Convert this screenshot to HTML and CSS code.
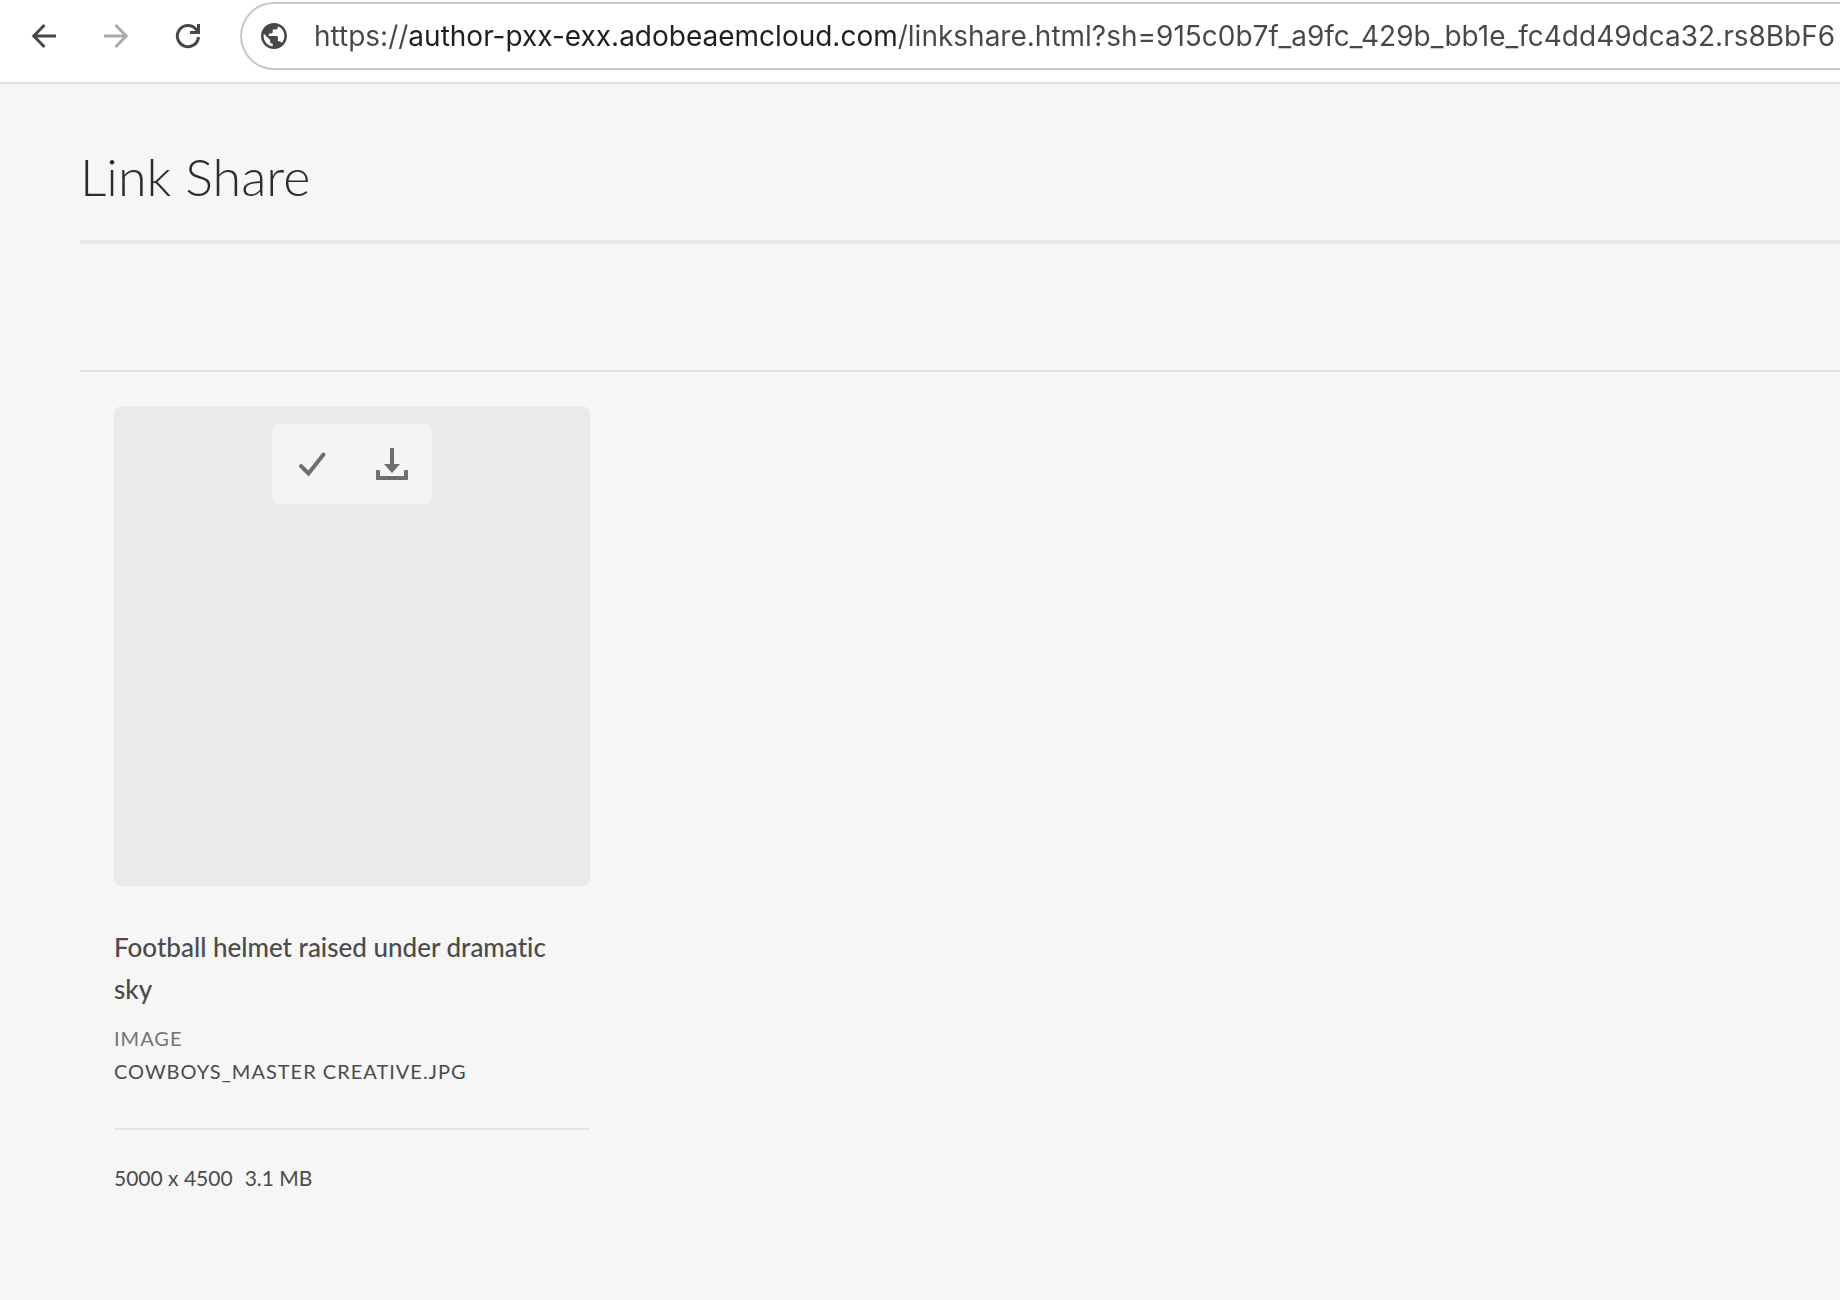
FILE: index.html
```html
<!DOCTYPE html>
<html lang="en">
  <head>
    <meta charset="UTF-8" />
    <meta name="viewport" content="width=device-width, initial-scale=1.0" />
    <title>Link Share</title>
    <link rel="stylesheet" href="styles.css">
  </head>
  <body>
    <header class="toolbar">
      <nav class="nav-buttons">
        <button type="button" class="nav-button" aria-label="Back">
          <svg width="24" height="24" viewBox="0 0 24 24">
            <path d="M12.5 1 1.8 12l10.7 11M2 12h22" />
          </svg>
        </button>
        <button type="button" class="nav-button forward" aria-label="Forward">
          <svg width="24" height="24" viewBox="0 0 24 24">
            <path d="M11.5 1 22.2 12 11.5 23M22 12H0" />
          </svg>
        </button>
        <button type="button" class="nav-button" aria-label="Reload">
          <svg width="24" height="24" viewBox="0 0 24 24">
            <path d="M22.500 13A10.600 10.600 0 1 1 20 5.200L22 8M22.500 0v8.500H14" />
          </svg>
        </button>
      </nav>
      <div class="address-bar">
        <svg class="globe" width="26" height="26" viewBox="2 2 20 20">
          <path d="M12 2C6.480 2 2 6.480 2 12s4.480 10 10 10 10-4.480 10-10S17.520 2 12 2zm-1 17.930c-3.950-.49-7-3.850-7-7.930 0-.62.08-1.210.21-1.790L9 15v1c0 1.100.9 2 2 2v1.930zm6.900-2.540c-.26-.81-1-1.390-1.900-1.390h-1v-3c0-.55-.45-1-1-1H8v-2h2c.55 0 1-.45 1-1V7h2c1.100 0 2-.9 2-2v-.41c2.930 1.190 5 4.060 5 7.410 0 2.080-.8 3.970-2.100 5.390z" />
        </svg>
        <input class="url" type="text" aria-label="Address" spellcheck="false"
          value="https://author-pxx-exx.adobeaemcloud.com/linkshare.html?sh=915c0b7f_a9fc_429b_bb1e_fc4dd49dca32.rs8BbF6" />
      </div>
    </header>

    <main class="page">
      <h1 class="page-title">Link Share</h1>
      <div class="action-bar"></div>
      <section class="cards">
        <article class="card">
          <div class="card-preview">
            <div class="quick-actions">
              <button type="button" aria-label="Select">
                <svg width="32" height="32" viewBox="0 0 32 32">
                  <path class="check" d="M5 18 12.500 25.500 27.500 6.500" />
                </svg>
              </button>
              <button type="button" aria-label="Download">
                <svg width="32" height="32" viewBox="0 0 32 32">
                  <path d="M15 0h2q1 0 1 1v15h6L16 25 8 16h6V1q0-1 1-1zM1 22h2q1 0 1 1v5h24v-5q0-1 1-1h2q1 0 1 1v8q0 1-1 1H1q-1 0-1-1v-8q0-1 1-1z" />
                </svg>
              </button>
            </div>
          </div>
          <div class="card-content">
            <h2 class="card-title">Football helmet raised under dramatic sky</h2>
            <p class="card-type">Image</p>
            <p class="card-file">Cowboys_Master Creative.jpg</p>
          </div>
          <div class="card-meta">
            <span>5000 x 4500</span>
            <span>3.1 MB</span>
          </div>
        </article>
      </section>
    </main>
  </body>
</html>
```

FILE: styles.css
```css
* {
  box-sizing: border-box;
}

body {
  margin: 0;
  min-height: 100vh;
  background-color: #f6f6f6;
  color: #4b4b4b;
  font-family: Lato, "Open Sans", sans-serif;
  font-variant-ligatures: none;
  overflow-x: hidden;
}

button {
  display: flex;
  justify-content: center;
  align-items: center;
  padding: 0;
  border: 0;
  background: none;
  cursor: pointer;
}

h1,
h2,
p {
  margin: 0;
}

/* browser toolbar */
.toolbar {
  display: flex;
  align-items: flex-start;
  gap: 16px;
  padding: 2px 0 12px 8px;
  background-color: #fff;
  border-bottom: 2px solid #dfdfdf;
}

.nav-buttons {
  display: flex;
}

.nav-button {
  width: 72px;
  height: 68px;
}

.nav-button svg {
  overflow: visible;
}

.nav-button path {
  fill: none;
  stroke: #474747;
  stroke-width: 3;
}

.forward path {
  stroke: #ababab;
}

.address-bar {
  flex: 1;
  display: flex;
  align-items: center;
  gap: 27px;
  height: 68px;
  padding-left: 19px;
  border: 2px solid #c7c7c7;
  border-right: 0;
  border-radius: 34px 0 0 34px;
}

.globe {
  flex: none;
  fill: #474747;
}

/* the host part of the address is darker than the rest */
.url {
  flex: 1;
  min-width: 0;
  height: 40px;
  padding: 0;
  border: 0;
  outline: 0;
  background: linear-gradient(90deg, #474747 94px, #1f1f1f 94px, #1f1f1f 582px, #474747 582px);
  background-clip: text;
  -webkit-background-clip: text;
  color: transparent;
  font: 28px/40px Inter, sans-serif;
}

/* page */
.page {
  padding-left: 80px;
}

.page-title {
  padding: 60px 0 32px;
  border-bottom: 4px solid #e9e9e9;
  color: #2c2c2c;
  font-size: 52px;
  font-weight: 300;
  line-height: 64px;
}

.action-bar {
  height: 128px;
  border-bottom: 2px solid #e1e1e1;
}

.cards {
  display: grid;
  grid-template-columns: repeat(auto-fill, 476px);
  gap: 34px;
  padding: 34px;
}

.card-preview {
  display: flex;
  justify-content: center;
  align-items: flex-start;
  height: 480px;
  padding-top: 18px;
  border-radius: 8px;
  background-color: #eaeaea;
}

.quick-actions {
  display: flex;
  border-radius: 8px;
  background-color: #f5f5f5;
}

.quick-actions button {
  width: 80px;
  height: 80px;
}

.quick-actions svg {
  fill: #6e6e6e;
}

.quick-actions .check {
  fill: none;
  stroke: #6e6e6e;
  stroke-width: 4;
  stroke-linecap: round;
}

.card-content {
  padding: 40px 0;
  border-bottom: 2px solid #e7e7e7;
}

.card-title {
  margin-bottom: 12px;
  font-size: 26px;
  font-weight: 500;
  line-height: 42px;
}

.card-type,
.card-file {
  font-size: 20px;
  line-height: 33px;
  letter-spacing: 1px;
  text-transform: uppercase;
}

.card-type {
  color: #747474;
}

.card-meta {
  display: flex;
  gap: 12px;
  padding-top: 32px;
  font-size: 21px;
  line-height: 32px;
}
```
